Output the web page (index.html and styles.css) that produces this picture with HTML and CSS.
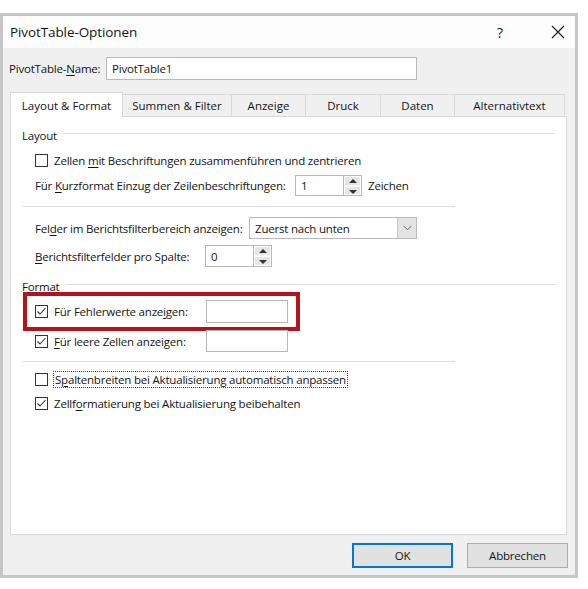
FILE: index.html
```html
<!DOCTYPE html>
<html lang="de">
<head>
    <meta charset="UTF-8">
    <title>PivotTable-Optionen</title>
    <link rel="stylesheet" href="styles.css">
</head>
<body>
    <div class="window">
        <div class="titlebar">
            <span class="title">PivotTable-Optionen</span>
            <span class="help">?</span>
            <span class="close">
                <svg width="14" height="14" viewBox="0 0 14 14"><path d="M1 1 L13 13 M13 1 L1 13" stroke="#222" stroke-width="1.2" fill="none"/></svg>
            </span>
        </div>

        <div class="dialog-body">
            <div class="name-row">
                <label>PivotTable-<u>N</u>ame:</label>
                <div class="textbox name-box">PivotTable1</div>
            </div>

            <div class="tabs">
                <div class="tab active">Layout &amp; Format</div>
                <div class="tab t-summen">Summen &amp; Filter</div>
                <div class="tab t-anzeige">Anzeige</div>
                <div class="tab t-druck">Druck</div>
                <div class="tab t-daten">Daten</div>
                <div class="tab t-alt">Alternativtext</div>
            </div>

            <div class="panel">
                <div class="group-head"><span>Layout</span><div class="rule"></div></div>

                <div class="row r-merge">
                    <span class="check"></span>
                    <span>Zellen <u>m</u>it Beschriftungen zusammenführen und zentrieren</span>
                </div>

                <div class="row r-indent">
                    <span class="lbl-indent">Für <u>K</u>urzformat Einzug der Zeilenbeschriftungen:</span>
                    <div class="spin indent-spin">
                        <div class="textbox">1</div>
                        <div class="spin-btns"><span class="up"></span><span class="down"></span></div>
                    </div>
                    <span class="unit">Zeichen</span>
                </div>

                <div class="separator"></div>

                <div class="row r-felder">
                    <span class="lbl-felder">Fel<u>d</u>er im Berichtsfilterbereich anzeigen:</span>
                    <div class="select">
                        <span class="select-text">Zuerst nach unten</span>
                        <span class="select-btn">
                            <svg width="9" height="6" viewBox="0 0 9 6"><path d="M0.5 0.8 L4.5 4.8 L8.5 0.8" stroke="#666" stroke-width="1" fill="none"/></svg>
                        </span>
                    </div>
                </div>

                <div class="row r-spalte">
                    <span class="lbl-spalte"><u>B</u>erichtsfilterfelder pro Spalte:</span>
                    <div class="spin col-spin">
                        <div class="textbox">0</div>
                        <div class="spin-btns"><span class="up"></span><span class="down"></span></div>
                    </div>
                </div>

                <div class="group-head g-format"><span>Format</span><div class="rule"></div></div>

                <div class="highlight">
                    <div class="row r-error">
                        <span class="check checked"></span>
                        <span class="lbl-format">Für Fehlerwerte anze<u>i</u>gen:</span>
                        <div class="textbox value-box"></div>
                    </div>
                </div>

                <div class="row r-empty">
                    <span class="check checked"></span>
                    <span class="lbl-format"><u>F</u>ür leere Zellen anzeigen:</span>
                    <div class="textbox value-box"></div>
                </div>

                <div class="separator sep-2"></div>

                <div class="row r-autofit">
                    <span class="check"></span>
                    <span class="focused">S<u>p</u>altenbreiten bei Aktualisierung automatisch anpassen</span>
                </div>

                <div class="row r-keep">
                    <span class="check checked"></span>
                    <span>Zellf<u>o</u>rmatierung bei Aktualisierung beibehalten</span>
                </div>
            </div>

            <div class="buttons">
                <div class="btn default">OK</div>
                <div class="btn">Abbrechen</div>
            </div>
        </div>
    </div>
</body>
</html>
```

FILE: styles.css
```css
* {
    margin: 0;
    padding: 0;
    box-sizing: border-box;
}

body {
    font-family: "Open Sans", "Noto Sans", sans-serif;
    font-size: 11.5px;
    letter-spacing: -0.2px;
    color: #141414;
    background-color: #ffffff;
    white-space: nowrap;
}

u {
    text-decoration: underline;
    text-underline-offset: 2px;
}

.window {
    margin-top: 13px;
    width: 578px;
    height: 565px;
    border: 3px solid #c6c6c6;
    display: flex;
    flex-direction: column;
}

.titlebar {
    height: 32px;
    background-color: #fdfdfd;
    display: flex;
    align-items: center;
    padding-left: 7px;
}

.title {
    font-size: 13.5px;
    letter-spacing: -0.1px;
    flex: 1;
}

.help {
    font-size: 14px;
    width: 54px;
}

.close {
    width: 24px;
    display: flex;
}

.dialog-body {
    flex: 1;
    background-color: #f0f0f0;
    display: flex;
    flex-direction: column;
    padding: 0 7px 0 7px;
}

.name-row {
    display: flex;
    align-items: center;
    margin-top: 9px;
    margin-left: -1px;
}

.name-row label {
    width: 97px;
}

.textbox {
    background-color: #ffffff;
    border: 1px solid #b8b8b8;
    height: 22px;
    padding-left: 5px;
    display: flex;
    align-items: center;
}

.name-box {
    width: 311px;
    height: 23px;
}

/* tabs */
.tabs {
    display: flex;
    align-items: flex-end;
    margin-top: 12px;
    height: 24px;
}

.tab {
    height: 22px;
    border: 1px solid #d9d9d9;
    border-bottom: none;
    border-left: none;
    background-color: #f0f0f0;
    display: flex;
    align-items: center;
    justify-content: center;
    font-size: 11.5px;
    letter-spacing: 0;
}

.tab.active {
    height: 25px;
    width: 113px;
    background-color: #ffffff;
    border-left: 1px solid #d9d9d9;
    margin-bottom: -1px;
    position: relative;
    z-index: 1;
}

.t-summen { width: 109px; }
.t-anzeige { width: 74px; }
.t-druck { width: 75px; }
.t-daten { width: 74px; }
.t-alt { width: 110px; }

.panel {
    width: 557px;
    height: 419px;
    background-color: #ffffff;
    border: 1px solid #d9d9d9;
    padding: 8px 11px 0 11px;
    display: flex;
    flex-direction: column;
}

.group-head {
    display: flex;
    align-items: center;
    height: 20px;
}

.group-head span {
    margin-right: 6px;
}

.group-head .rule {
    flex: 1;
    height: 1px;
    background-color: #dcdcdc;
    margin-top: -3px;
}

.row {
    display: flex;
    align-items: center;
    padding-left: 13px;
}

.check {
    width: 13px;
    height: 13px;
    border: 1px solid #333333;
    background-color: #ffffff;
    margin-right: 6px;
    flex-shrink: 0;
}

.check.checked {
    background: #ffffff url("data:image/svg+xml,%3Csvg xmlns='http://www.w3.org/2000/svg' width='11' height='11' viewBox='0 0 11 11'%3E%3Cpath d='M1.5 5.5 L4 8 L9.5 2' stroke='%23333' stroke-width='1.1' fill='none'/%3E%3C/svg%3E") no-repeat center;
}

.r-merge {
    height: 20px;
    margin-top: 5px;
}

.r-indent {
    height: 21px;
    margin-top: 5px;
}

.lbl-indent {
    width: 260px;
}

.spin {
    display: flex;
    height: 21px;
}

.spin .textbox {
    height: 21px;
    border-right: none;
}

.spin-btns {
    width: 19px;
    border: 1px solid #b8b8b8;
    display: flex;
    flex-direction: column;
    background-color: #ffffff;
}

.spin-btns span {
    flex: 1;
    background-color: #e6e6e6;
    margin: 1px;
    position: relative;
}

.spin-btns .up::after,
.spin-btns .down::after {
    content: "";
    position: absolute;
    left: 4px;
    border-left: 4px solid transparent;
    border-right: 4px solid transparent;
}

.spin-btns .up::after {
    top: 2px;
    border-bottom: 4px solid #333;
}

.spin-btns .down::after {
    top: 3px;
    border-top: 4px solid #333;
}

.indent-spin .textbox {
    width: 48px;
}

.unit {
    margin-left: 6px;
}

.separator {
    height: 1px;
    width: 433px;
    background-color: #dcdcdc;
    margin-top: 10px;
}

.r-felder {
    height: 22px;
    margin-top: 10px;
}

.lbl-felder {
    width: 214px;
}

.select {
    width: 168px;
    height: 22px;
    border: 1px solid #b8b8b8;
    background-color: #ffffff;
    display: flex;
}

.select-text {
    flex: 1;
    padding-left: 5px;
    display: flex;
    align-items: center;
}

.select-btn {
    width: 19px;
    background-color: #e3e3e3;
    border-left: 1px solid #c8c8c8;
    display: flex;
    align-items: center;
    justify-content: center;
}

.r-spalte {
    height: 22px;
    margin-top: 6px;
}

.lbl-spalte {
    width: 170px;
}

.col-spin {
    height: 22px;
}

.col-spin .textbox {
    width: 48px;
    height: 22px;
}

.g-format {
    margin-top: 9px;
}

.highlight {
    margin-top: -4px;
    margin-left: 1px;
    width: 277px;
    height: 39px;
    border: 4px solid #b5121b;
    display: flex;
    align-items: center;
}

.highlight .row {
    padding-left: 8px;
}

.lbl-format {
    width: 152px;
}

.value-box {
    width: 82px;
    height: 23px;
}

.r-empty {
    height: 22px;
    margin-top: -1px;
}

.r-empty .value-box {
    height: 22px;
}

.sep-2 {
    margin-top: 9px;
}

.r-autofit {
    height: 18px;
    margin-top: 8px;
}

.focused {
    outline: 1px dotted #444;
    padding: 0 1px;
}

.r-keep {
    height: 18px;
    margin-top: 6px;
}

/* buttons */
.buttons {
    display: flex;
    justify-content: flex-end;
    gap: 14px;
    margin-top: 8px;
}

.btn {
    width: 101px;
    height: 25px;
    border: 1px solid #adadad;
    background-color: #e1e1e1;
    display: flex;
    align-items: center;
    justify-content: center;
}

.btn.default {
    border: 2px solid #0078d7;
}
```
